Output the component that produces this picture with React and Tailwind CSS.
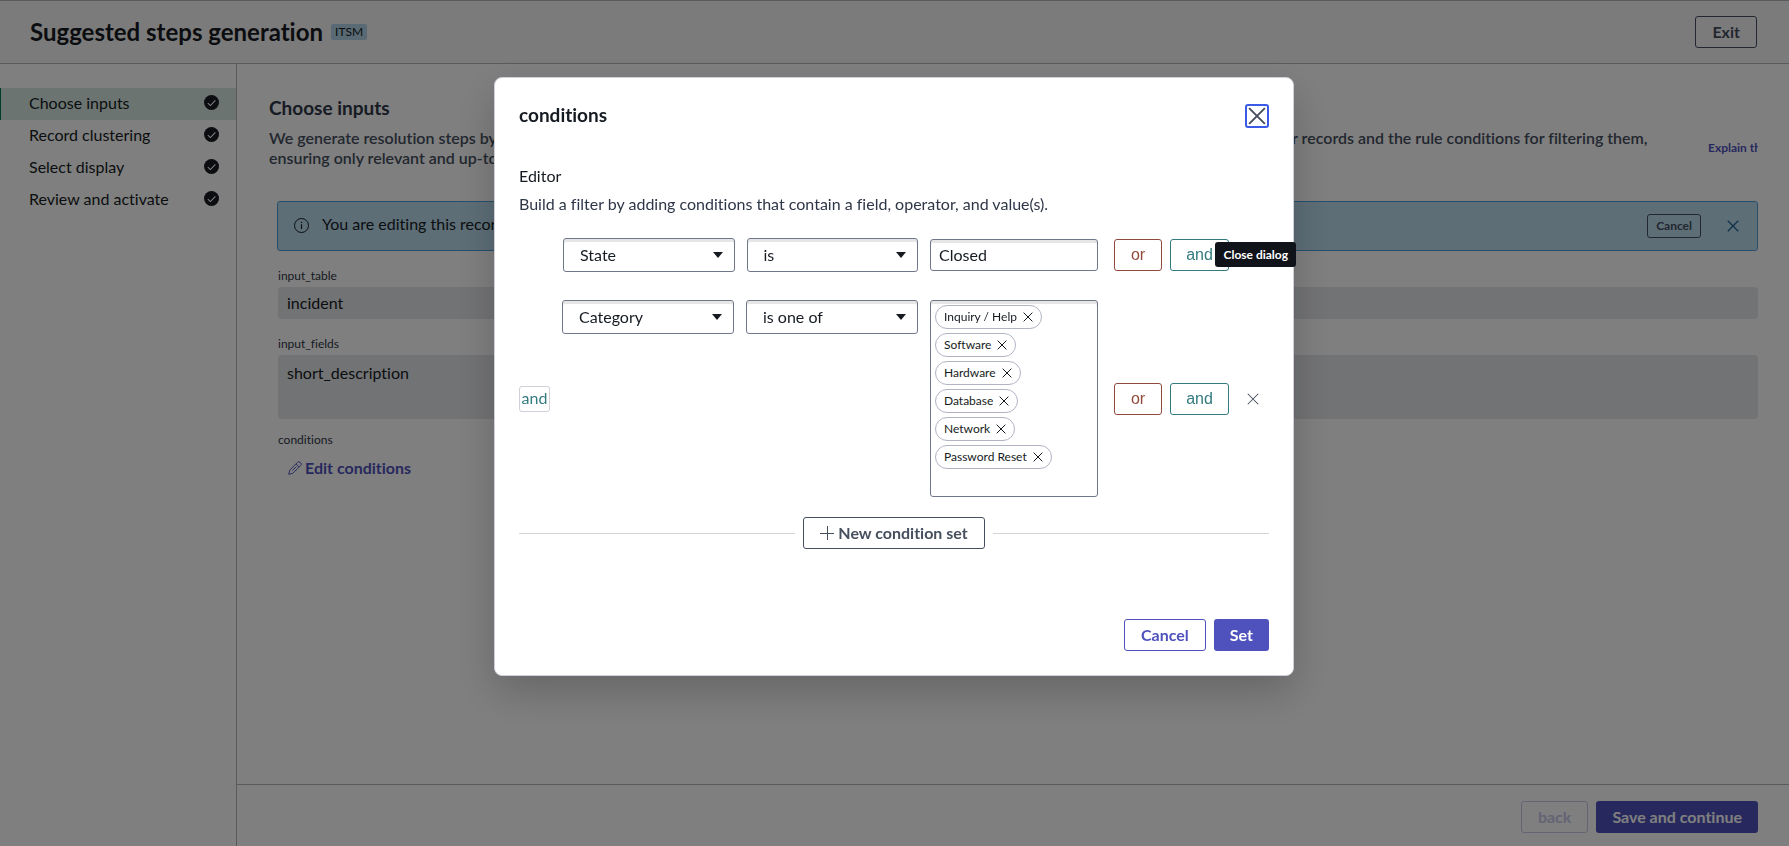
import React, { useState } from 'react';

const STEPS = ['Choose inputs', 'Record clustering', 'Select display', 'Review and activate'];

const CATEGORIES = ['Inquiry / Help', 'Software', 'Hardware', 'Database', 'Network', 'Password Reset'];

const CloseIcon = ({ className, width = 1 }) => (
  <svg viewBox="0 0 16 16" fill="none" stroke="currentColor" strokeWidth={width} className={className} aria-hidden="true">
    <path d="M1 1l14 14M15 1L1 15" />
  </svg>
);

const CheckCircle = () => (
  <svg viewBox="0 0 16 16" className="size-4" aria-hidden="true">
    <circle cx="7.5" cy="7.5" r="7.5" fill="#161b22" />
    <path d="M3.8 8.2l2.6 2.4 5-5.2" fill="none" stroke="#fff" strokeWidth="1.1" />
  </svg>
);

const InfoIcon = () => (
  <svg viewBox="0 0 16 16" className="size-4" fill="none" stroke="#161b22" aria-hidden="true">
    <circle cx="7.5" cy="7.5" r="7" />
    <path d="M7.5 6.3v4.7M7.5 3.8v1.2" strokeWidth="1.2" />
  </svg>
);

const PencilIcon = () => (
  <svg viewBox="0 0 16 16" className="size-3.5" fill="none" stroke="currentColor" strokeWidth="1.1" aria-hidden="true">
    <path d="M.8 15.2l1.2-4.8 9-9a2 2 0 0 1 2.8 0l.8.8a2 2 0 0 1 0 2.8l-9 9z" />
    <path d="M9.2 3.4l3.4 3.4M5 11l4.6-4.6" />
  </svg>
);

const PlusIcon = () => (
  <svg viewBox="0 0 14 14" className="size-3.5" fill="none" stroke="currentColor" aria-hidden="true">
    <path d="M7.5 0v14M0 7.5h14" />
  </svg>
);

const fieldClass =
  'rounded-[3px] border border-[#70778a] bg-white text-base text-[#161b22] shadow-[inset_0_3px_0_#e6e6e6]';

const Dropdown = ({ label, value }) => (
  <div className="relative min-w-0 flex-1">
    <select aria-label={label} defaultValue={value} className={`${fieldClass} h-[34px] w-full appearance-none pr-8 pl-4`}>
      <option>{value}</option>
    </select>
    <svg viewBox="0 0 10 6" className="pointer-events-none absolute top-3.5 right-3 h-1.5 w-2.5" aria-hidden="true">
      <path d="M0 0h10L5 6z" fill="#161b22" />
    </svg>
  </div>
);

const LogicButtons = () => (
  <div className="flex gap-2 font-['Liberation_Sans',sans-serif] text-base">
    <button className="h-8 w-12 rounded-[3px] border border-[#91493b] text-[#91493b]">or</button>
    <button className="h-8 w-[59px] rounded-[3px] border border-[#327a7f] text-[#327a7f]">and</button>
  </div>
);

const ConditionsDialog = ({ onClose }) => {
  const [categories, setCategories] = useState(CATEGORIES);

  const removeCategory = (name) => {
    setCategories(categories.filter((c) => c !== name));
  };

  return (
    <div className="fixed inset-0 flex items-start justify-center bg-black/50 pt-[77px] pr-px">
      <div
        role="dialog"
        aria-labelledby="dialog-title"
        className="relative w-[800px] rounded-lg border border-[#cfd0d8] bg-white px-6 pt-[25px] pb-6 shadow-[0_16px_40px_rgba(0,0,0,0.2)]"
      >
        <div className="flex items-center justify-between">
          <h2 id="dialog-title" className="pb-0.5 text-[19px] leading-6 font-bold">conditions</h2>
          <button
            aria-label="Close dialog"
            onClick={onClose}
            className="grid size-6 place-items-center rounded-[3px] border-2 border-[#3a5ae8] text-[#464f5e]"
          >
            <CloseIcon className="size-[18px]" width={1.7} />
          </button>
        </div>

        <p className="mt-[37px] text-base leading-5">Editor</p>
        <p className="mt-2 text-base leading-5 text-[#2e3647]">
          Build a filter by adding conditions that contain a field, operator, and value(s).
        </p>

        <div className="mt-6 flex items-center pl-11">
          <div className="flex w-[355px] gap-3">
            <Dropdown label="Field" value="State" />
            <Dropdown label="Operator" value="is" />
          </div>
          <input aria-label="Value" defaultValue="Closed" className={`${fieldClass} ml-3 h-8 w-[168px] px-2 pb-0.5`} />
          <div className="ml-4">
            <LogicButtons />
          </div>
        </div>

        <div className="mt-7 flex items-center">
          <span className="flex h-[26px] w-[31px] items-center justify-center rounded-[3px] border border-[#cfd0d8] pb-0.5 text-base text-[#327a7f]">
            and
          </span>
          <div className="ml-3 flex w-[356px] gap-3 self-start">
            <Dropdown label="Field" value="Category" />
            <Dropdown label="Operator" value="is one of" />
          </div>
          <ul className={`${fieldClass} ml-3 flex h-[197px] w-[168px] flex-col items-start gap-1 px-1 pt-1`}>
            {categories.map((name) => (
              <li key={name} className="flex h-6 items-center gap-1.5 rounded-full border border-[#b0b4c3] bg-white px-2 text-xs">
                {name}
                <button aria-label={`Remove ${name}`} onClick={() => removeCategory(name)}>
                  <CloseIcon className="size-2.5" width={1.6} />
                </button>
              </li>
            ))}
          </ul>
          <div className="ml-4">
            <LogicButtons />
          </div>
          <button aria-label="Remove condition" className="ml-[18px] text-[#464f5e]">
            <CloseIcon className="size-3" width={1.4} />
          </button>
        </div>

        <div className="mt-5 flex items-center gap-2">
          <span className="h-px flex-1 bg-[#d3d4d8]" />
          <button className="flex h-8 items-center gap-1 rounded-[3px] border border-[#464f5e] px-4 text-base font-bold text-[#464f5e]">
            <PlusIcon />
            New condition set
          </button>
          <span className="h-px flex-1 bg-[#d3d4d8]" />
        </div>

        <div className="mt-[70px] flex justify-end gap-2 text-base font-bold">
          <button onClick={onClose} className="h-8 rounded-[3px] border border-[#4f52bd] px-4 text-[#4f52bd]">
            Cancel
          </button>
          <button className="h-8 rounded-[3px] bg-[#4f52bd] px-4 text-white">Set</button>
        </div>

        <div
          role="tooltip"
          className="absolute top-[164px] -right-[3px] rounded-[3px] bg-[#10131a] px-2 text-xs leading-[25px] font-bold text-white"
        >
          Close dialog
        </div>
      </div>
    </div>
  );
};

const App = () => {
  const [isOpen, setIsOpen] = useState(true);

  return (
    <div className="flex h-screen flex-col bg-white font-['Lato',sans-serif] text-[#161b22] [font-variant-ligatures:none]">
      <header className="flex h-16 shrink-0 items-center justify-between border-y border-[#b4b5bf] bg-[#f7f7f7] pr-8 pb-px pl-[30px]">
        <div className="flex items-center gap-2">
          <h1 className="text-2xl font-bold">Suggested steps generation</h1>
          <span className="rounded-xs bg-[#b2d5e8] px-1 text-xs leading-4">ITSM</span>
        </div>
        <button className="h-8 rounded-[3px] border border-[#464f5e] px-4 text-base font-bold text-[#464f5e]">Exit</button>
      </header>

      <div className="flex min-h-0 flex-1">
        <nav className="w-[237px] shrink-0 border-r border-[#b4b5bf] pt-6">
          {STEPS.map((step, i) => (
            <a
              key={step}
              href="#"
              className={`flex h-8 items-center justify-between border-l pr-4 pb-0.5 pl-7 text-base ${
                i === 0 ? 'border-[#047857] bg-[#d8e8e3]' : 'border-transparent'
              }`}
            >
              {step}
              <CheckCircle />
            </a>
          ))}
        </nav>

        <div className="flex min-w-0 flex-1 flex-col">
          <main className="min-h-0 flex-1 overflow-hidden pt-8 pr-[31px] pl-8">
            <h2 className="text-[19px] leading-6 font-bold text-[#2e3647]">Choose inputs</h2>
            <div className="mt-2 flex items-center justify-between">
              <p className="max-w-[1400px] text-base leading-5 font-semibold text-[#464f5e]">
                We generate resolution steps by analyzing your resolved records from closed incidents. Choose the table and fields that we use to find your similar records and the rule conditions for filtering them,
                ensuring only relevant and up-to-date records are used.
              </p>
              <button className="w-[50px] shrink-0 overflow-hidden text-left text-xs font-bold whitespace-nowrap text-[#4f52bd]">
                Explain this
              </button>
            </div>

            <div className="mt-[33px] ml-2 flex h-[50px] items-center rounded-[3px] border border-[#4f9fd8] bg-[#bbdcee] pr-[18px] pl-4">
              <InfoIcon />
              <p className="ml-3 flex-1 pb-1 text-base">You are editing this record in the global scope.</p>
              <button className="h-6 rounded-[3px] border border-[#464f5e] px-2 text-xs font-bold text-[#464f5e]">Cancel</button>
              <button aria-label="Dismiss" className="ml-[26px] text-[#1b5f8f]">
                <CloseIcon className="size-3" width={1.6} />
              </button>
            </div>

            <div className="mt-[17px] ml-[9px] flex flex-col items-start">
              <label htmlFor="input_table" className="text-xs leading-4 text-[#2e3647]">input_table</label>
              <input
                id="input_table"
                readOnly
                defaultValue="incident"
                className="mt-[3px] h-8 w-full rounded bg-[#e5e6ea] px-[9px] pb-0.5 text-base"
              />
              <label htmlFor="input_fields" className="mt-[17px] text-xs leading-4 text-[#2e3647]">input_fields</label>
              <textarea
                id="input_fields"
                readOnly
                defaultValue="short_description"
                className="mt-[3px] h-16 w-full resize-none rounded bg-[#e5e6ea] px-[9px] py-2 text-base leading-5"
              />
              <span className="mt-[13px] text-xs leading-4 text-[#2e3647]">conditions</span>
              <button
                onClick={() => setIsOpen(true)}
                className="mt-1 ml-2.5 flex h-8 items-center gap-[3px] text-base font-bold text-[#4f52bd]"
              >
                <PencilIcon />
                Edit conditions
              </button>
            </div>
          </main>

          <footer className="flex h-[62px] shrink-0 items-center justify-end gap-2 border-t border-[#b4b5bf] pt-0.5 pr-[31px] text-base font-bold">
            <button disabled className="h-8 rounded-[3px] border border-[#c9c9e8] px-4 text-[#c9c9e8]">back</button>
            <button className="h-8 rounded-[3px] bg-[#4f52bd] px-4 text-white">Save and continue</button>
          </footer>
        </div>
      </div>

      {isOpen && <ConditionsDialog onClose={() => setIsOpen(false)} />}
    </div>
  );
};

export default App;
